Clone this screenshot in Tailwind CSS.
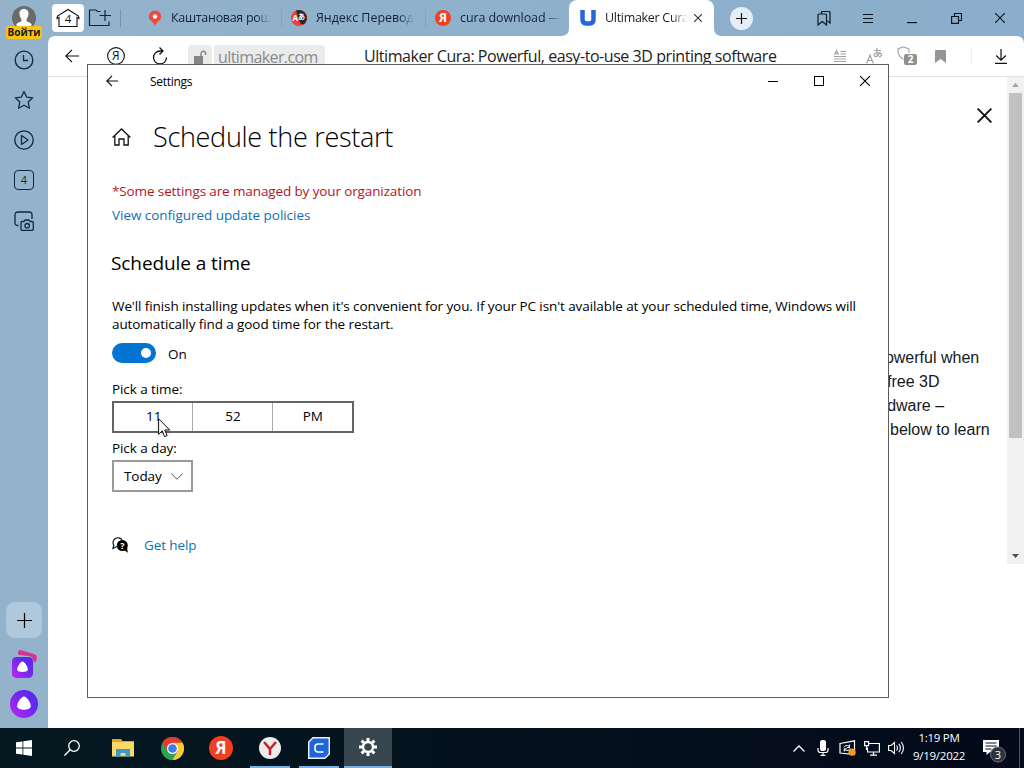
<!DOCTYPE html>
<html lang="en">
<head>
  <meta charset="UTF-8">
  <meta name="viewport" content="width=device-width, initial-scale=1.0">
  <title>Settings</title>
  <script src="https://cdn.jsdelivr.net/npm/@tailwindcss/browser@4"></script>
</head>
<body class="relative w-[1024px] h-[768px] overflow-hidden flex flex-col bg-white text-black font-['Open_Sans','Noto_Sans',sans-serif]">

  <!-- Browser -->
  <div class="h-[728px] flex bg-linear-to-r from-[#94b3cb] to-[#8aaecb]">
    <!-- Sidebar -->
    <aside class="w-12 shrink-0 flex flex-col items-center text-[#12283c]">
      <div class="relative h-10 w-full flex justify-center pt-1.5">
        <svg class="w-6 h-6" viewBox="0 0 24 24"><circle cx="12" cy="12" r="12" fill="#6b6b6b"/><path d="M12 3c3.2 0 4.800 2.200 4.500 5.300-.3 2.400-1.200 3.700-1.900 4.700v2.400c2.600.9 4.300 1.300 5.300 3.400A12 12 0 0 1 12 23a12 12 0 0 1-7.900-4.200c1-2.100 2.700-2.500 5.300-3.400V13c-.7-1-1.600-2.300-1.900-4.700C7.200 5.200 8.800 3 12 3z" fill="#fff"/></svg>
        <span class="absolute left-[6px] top-[26px] w-9 h-[13px] rounded-[3px] bg-[#f7c413] text-[#1a1a1a] text-[10px] leading-[12px] font-bold text-center">Войти</span>
      </div>
      <div class="h-10 flex items-center"><svg class="w-5 h-5" viewBox="0 0 20 20" fill="none" stroke="currentColor" stroke-width="1.300"><circle cx="10" cy="10" r="8.800"/><path d="M9.500 5v5.500h4.500"/></svg></div>
      <div class="h-10 flex items-center"><svg class="w-5 h-5" viewBox="0 0 20 20" fill="none" stroke="currentColor" stroke-width="1.300" stroke-linejoin="round"><path d="M10 1.500l2.600 5.600 6.100.7-4.500 4.200 1.200 6.200L10 15.200l-5.400 3 1.200-6.200L1.300 7.800l6.100-.7z"/></svg></div>
      <div class="h-10 flex items-center"><svg class="w-5 h-5" viewBox="0 0 20 20" fill="none" stroke="currentColor" stroke-width="1.300" stroke-linejoin="round"><circle cx="10" cy="10" r="9.200"/><path d="M7.500 5.500v9l6.500-4.500z"/></svg></div>
      <div class="h-10 flex items-center"><div class="w-5 h-5 border border-[#12283c] rounded-[4px] text-[11px] leading-[18px] text-center">4</div></div>
      <div class="h-10 flex items-center pt-px"><svg class="w-5 h-5" viewBox="0 0 20 20" fill="none" stroke="currentColor" stroke-width="1.300" stroke-linejoin="round"><path d="M4.500 14.500Q1 14.500 1 12V3.500a2.500 2.500 0 0 1 2.500-2.500h12a2.500 2.500 0 0 1 2.500 2.500V8"/><path d="M7 11.500a1 1 0 0 1 1-1h2l1.200-1.500h3.600L16 10.500h2.300a1 1 0 0 1 1 1v6.800a1 1 0 0 1-1 1H8a1 1 0 0 1-1-1z"/><circle cx="13.200" cy="14.700" r="2.200"/></svg></div>

      <div class="mt-auto w-9 h-9 mb-1.5 rounded-[9px] bg-[#afc8dc] flex items-center justify-center text-black"><svg class="w-[15px] h-[15px]" viewBox="0 0 15 15" stroke="currentColor" stroke-width="1.200"><path d="M7.500 0v15M0 7.500h15"/></svg></div>
      <div class="h-10 flex items-center"><svg class="w-7 h-7" viewBox="0 0 28 28">
        <defs><linearGradient id="alice" x1="0" y1="1" x2="1" y2="0"><stop offset="0" stop-color="#c324f5"/><stop offset=".6" stop-color="#6a28ee"/><stop offset="1" stop-color="#5128ea"/></linearGradient></defs>
        <path d="M8.500 1Q9-.5 11 .3C16 2 20 2.500 25 4.500c2.200 1 2.600 3 .5 8l-2-1Q23 7 19 6L9 5Q7.500 4 8.500 1z" fill="#d9309a"/><rect x="2" y="7" width="21" height="21" rx="4.500" fill="url(#alice)"/><path d="M12.500 11.500c2.200 0 6 6.200 5.200 8.800-.6 2.300-9.800 2.300-10.400 0-.8-2.600 3-8.800 5.200-8.800z" fill="#fff"/></svg></div>
      <div class="h-10 mb-1 flex items-center"><svg class="w-7 h-7" viewBox="0 0 28 28"><circle cx="14" cy="14" r="14" fill="url(#alice)"/><path d="M14 6.500c3 0 7.500 7 6.700 10.300-.9 3.900-12.500 3.900-13.400 0C6.500 13.500 11 6.500 14 6.500z" fill="#fff"/></svg></div>
    </aside>

    <div class="flex-1 min-w-0 flex flex-col">
      <!-- Tabs -->
      <div class="h-9 flex items-center pl-1 text-[13px] text-[#10233a] whitespace-nowrap">
        <div class="w-8 h-7 rounded-[4px] bg-white flex items-center justify-center">
          <svg class="w-6 h-5" viewBox="0 0 24 20" fill="none" stroke="#111" stroke-width="1.100"><path d="M3 18.500V9.500L1 10.500 1.500 8 12 1.500 22.500 8l.5 2.500-2-1v9z"/><text x="12" y="14.800" text-anchor="middle" font-size="11.500" fill="#111" stroke="none">4</text></svg>
        </div>
        <svg class="ml-1 w-6 h-5 shrink-0" viewBox="0 0 24 20" fill="none" stroke="currentColor" stroke-width="1.200"><path d="M12.500 3.500H9.500L8 2H1.500v15.500h19.500v-4"/><path d="M17 2v11M11.500 7.500H23"/></svg>
        <div class="ml-2 w-px h-[18px] bg-[#7593ab]"></div>
        <div class="w-[160px] flex items-center pl-[26px]">
          <svg class="w-4 h-4 shrink-0" viewBox="0 0 16 16"><path d="M8 .5a6.200 6.200 0 0 1 6.200 6.200C14.200 10.500 9.500 11 8 16 6.500 11 1.800 10.500 1.800 6.700A6.200 6.200 0 0 1 8 .5z" fill="#f4453a"/><circle cx="8" cy="6.500" r="2.300" fill="#fff"/></svg>
          <span class="ml-2 text-[12.500px] tracking-[-0.3px] mask-r-from-85%">Каштановая рощ</span>
        </div>
        <div class="w-px h-[18px] bg-[#84a3bc]"></div>
        <div class="w-[143px] flex items-center pl-[9px]">
          <svg class="w-4 h-4 shrink-0" viewBox="0 0 16 16"><circle cx="8" cy="8" r="8" fill="#ee4035"/><path d="M5 .6A8 8 0 0 1 12.500 14.600l-3-1.200L7.500 9z" fill="#252a32"/><text x="1.500" y="11" font-size="8" font-weight="bold" fill="#fff">A</text><text x="7" y="9" font-size="7" font-weight="bold" fill="#fff" font-family="Noto Sans CJK JP">あ</text></svg>
          <span class="ml-[9px] text-[12.500px] tracking-[-0.05px] mask-r-from-85%">Яндекс Перевод</span>
        </div>
        <div class="w-px h-[18px] bg-[#84a3bc]"></div>
        <div class="w-[143px] flex items-center pl-[9px]">
          <svg class="w-4 h-4 shrink-0" viewBox="0 0 16 16"><circle cx="8" cy="8" r="8" fill="#f33f23"/><text x="8" y="12.300" text-anchor="middle" font-size="12" font-weight="bold" fill="#fff">Я</text></svg>
          <span class="ml-[9px] text-[12.500px] tracking-[-0.1px] mask-r-from-85%">cura download —</span>
        </div>
        <div class="relative w-[145px] h-9 bg-white rounded-t-[8px] flex items-center pl-[11px] text-[#222]">
          <svg class="absolute -left-2 bottom-0 w-2 h-2" viewBox="0 0 8 8"><path d="M8 0v8H0q8 0 8-8z" fill="#fff"/></svg>
          <svg class="absolute -right-2 bottom-0 w-2 h-2" viewBox="0 0 8 8"><path d="M0 0v8h8Q0 8 0 0z" fill="#fff"/></svg>
          <svg class="w-4 h-4 shrink-0" viewBox="0 0 16 16" fill="none"><path d="M2.500 0v9.500q0 4 4 4h3q4 0 4-4V0" stroke="#2566d8" stroke-width="4.500"/></svg>
          <span class="ml-[9px] w-[83px] text-[12.500px] tracking-[-0.3px] mask-r-from-80%">Ultimaker Cura</span>
          <svg class="ml-[6px] w-2 h-2 shrink-0" viewBox="0 0 8 8" stroke="#333" stroke-width="1.100"><path d="M0 0l8 8M8 0L0 8"/></svg>
        </div>
        <div class="ml-[16px] w-[23px] h-[23px] rounded-full bg-[#e3eef8] flex items-center justify-center"><svg class="w-[11px] h-[11px]" viewBox="0 0 11 11" stroke="#111" stroke-width="1.200"><path d="M5.500 0v11M0 5.500h11"/></svg></div>
        <div class="ml-auto pr-[2px] flex text-[#0c1826]">
          <div class="w-11 flex justify-center"><svg class="w-[14px] h-[15px]" viewBox="0 0 14 15" fill="none" stroke="currentColor" stroke-width="1.200"><path d="M4.500 3V1.500q0-1 1-1h6.500q1 0 1 1V12l-2.500-2"/><path d="M1 14V4q0-1 1-1h6.500q1 0 1 1v10L5.200 10.500z"/></svg></div>
          <div class="w-11 flex justify-center items-center"><svg class="w-[10px] h-[11px]" viewBox="0 0 10 11" stroke="currentColor" stroke-width="1.100"><path d="M0 1.500h10M0 5.500h10M0 9.500h10"/></svg></div>
          <div class="w-11 flex justify-center items-end"><svg class="w-[10px] h-[2px] mb-[2px]" viewBox="0 0 10 2"><path d="M0 0h10v1.200H0z" fill="currentColor"/></svg></div>
          <div class="w-11 flex justify-center items-center"><svg class="w-[11px] h-[11px]" viewBox="0 0 11 11" fill="none" stroke="currentColor" stroke-width="1.200"><path d="M3.500 3.500v-3h7v7h-3M.6 3.500h6.900v6.900H.6z"/></svg></div>
          <div class="w-11 flex justify-center items-center"><svg class="w-[10px] h-[10px]" viewBox="0 0 10 10" stroke="currentColor" stroke-width="1.200"><path d="M0 0l10 10M10 0L0 10"/></svg></div>
        </div>
      </div>

      <!-- Address bar -->
      <div class="h-[41px] shrink-0 bg-white rounded-t-[7px] border-b border-[#e4e4e4] flex items-center text-[#111] whitespace-nowrap">
        <svg class="ml-[17px] w-[14px] h-[14px] shrink-0" viewBox="0 0 14 14" fill="none" stroke="currentColor" stroke-width="1.200"><path d="M14 7H.8M7 .8L.8 7 7 13.200"/></svg>
        <svg class="ml-[28px] w-[18px] h-[18px] shrink-0" viewBox="0 0 18 18" fill="none" stroke="currentColor" stroke-width="1.100"><circle cx="9" cy="9" r="8.400"/><text x="8.800" y="13.200" text-anchor="middle" font-size="12" fill="currentColor" stroke="none">Я</text></svg>
        <svg class="ml-[27px] w-[16px] h-[18px] shrink-0" viewBox="0 0 16 18" fill="none" stroke="currentColor" stroke-width="1.300"><path d="M10.500 4H8a6.500 6.500 0 1 0 6.500 6.500M7.500 .5L11 4 7.500 7.500"/></svg>
        <div class="ml-[20px] mt-[1px] w-6 h-[24px] rounded-[4px] bg-[#ebebeb] flex items-center justify-center"><svg class="w-[14px] h-[14px]" viewBox="0 0 14 14"><path d="M1 6h9v8H1z" fill="#858585"/><path d="M8 6V3.500a2.300 2.300 0 0 1 4.600 0V5" fill="none" stroke="#858585" stroke-width="1.400"/></svg></div>
        <div class="ml-[2px] mt-[1px] w-[111px] h-[24px] rounded-[4px] bg-[#ebebeb] pl-1 text-[16px] leading-[24px] tracking-[-0.6px] text-[#8a8a8a]">ultimaker.com</div>
        <div class="ml-[39px] text-[16px] tracking-[-0.440px] text-[#222]">Ultimaker Cura: Powerful, easy-to-use 3D printing software</div>
        <div class="ml-auto flex items-center pr-[17px]">
          <svg class="w-3 h-3" viewBox="0 0 12 12" stroke="#a0a0a0" fill="none"><path d="M6.500 1.500H12M6.500 4H12M0 6.500h12M0 9h12M0 11.500h12"/><path d="M.5 5L2.500.5 4.500 5M1.200 3.500h2.600" stroke-width="1.200"/></svg>
          <svg class="ml-[20px] w-4 h-4" viewBox="0 0 16 16" stroke="#a0a0a0" fill="none" stroke-width="1.100"><path d="M.6 15.500L4 7l3.400 8.500M1.800 12.500h4.400"/><path d="M8 2.500h7M11 0v5.500q0 2 1 3M14 4q-2 5-5 4.500-1.500-.5-.5-2.500 2-2 6-.8 2.500 2-1.500 4"/></svg>
          <svg class="ml-[15px] w-5 h-5" viewBox="0 0 20 20" fill="none"><path d="M6.500.8L12 3v4M6.500.8L1 3q-.5 7 5.500 10.500" stroke="#a0a0a0" stroke-width="1.100"/><rect x="7" y="8" width="13" height="11" rx="2" fill="#8f8f8f"/><text x="13.500" y="17" text-anchor="middle" font-size="10" font-weight="bold" fill="#fff">2</text></svg>
          <svg class="ml-[18px] w-[11px] h-[13px]" viewBox="0 0 11 13"><path d="M0 1q0-1 1-1h9q1 0 1 1v12L5.500 9 0 13z" fill="#959595"/></svg>
          <div class="ml-[25px] w-px h-4 bg-[#eeeeee]"></div>
          <svg class="ml-[23px] w-[12px] h-[15px]" viewBox="0 0 12 15" fill="none" stroke="currentColor" stroke-width="1.200"><path d="M6 0v11M1.200 6.500L6 11.200l4.800-4.700M0 14.300h12"/></svg>
        </div>
      </div>

      <!-- Page -->
      <div class="flex-1 bg-white flex justify-end">
        <div class="w-[131px] flex flex-col">
          <svg class="mt-[31px] ml-[101px] w-[15px] h-[15px] shrink-0" viewBox="0 0 15 15" stroke="#111" stroke-width="1.900"><path d="M.6.600l13.800 13.800M14.400.6L.6 14.400"/></svg>
          <div class="mt-[223px] text-[16px] leading-6 text-[#15191d] whitespace-nowrap font-['Liberation_Sans',Arial,sans-serif]">
            <p>powerful when</p>
            <p class="pl-[11px]">free 3D</p>
            <p class="-ml-[12px]">hardware –</p>
            <p class="pl-[14px]">below to learn</p>
          </div>
        </div>
        <div class="w-[17px] h-[487px] bg-[#f1f1f1] flex flex-col items-center">
          <svg class="w-[17px] h-4 shrink-0" viewBox="0 0 17 16"><path d="M5 10h7L8.500 6z" fill="#a3a3a3"/></svg>
          <div class="w-[13px] h-[345px] bg-[#c1c1c1]"></div>
          <svg class="mt-auto w-[17px] h-4 shrink-0" viewBox="0 0 17 16"><path d="M5 6h7l-3.500 4z" fill="#505050"/></svg>
        </div>
      </div>
    </div>
  </div>

  <!-- Taskbar -->
  <div class="h-10 flex items-center bg-linear-to-r from-[#051820] to-[#030a1a] text-white">
    <div class="w-12 flex justify-center"><svg class="w-4 h-4" viewBox="0 0 16 16" fill="#fff"><path d="M0 2.300L6.500 1.400v6.200H0zM7.300 1.300L16 0v7.600H7.300zM0 8.400h6.500v6.200L0 13.700zM7.300 8.400H16V16l-8.700-1.300z"/></svg></div>
    <div class="w-12 flex justify-center"><svg class="w-4 h-4" viewBox="0 0 16 16" fill="none" stroke="#fff" stroke-width="1.300"><circle cx="10" cy="6" r="5.300"/><path d="M6.200 9.800L.4 15.600"/></svg></div>
    <div class="w-[53px] flex justify-center"><svg class="w-[22px] h-[18px]" viewBox="0 0 22 18"><path d="M0 0h9l1.500 2H22v15H0z" fill="#e3a22c"/><path d="M0 3h22v14.500H0z" fill="#fbd968"/><path d="M4 10h14v8h-4.500v-4h-5v4H4z" fill="#3f96c8"/></svg></div>
    <div class="w-[46px] flex justify-center"><svg class="w-[23px] h-[23px]" viewBox="0 0 24 24"><circle cx="12" cy="12" r="12" fill="#2ba24c"/><path d="M1.600 6A12 12 0 0 1 22.400 6L12 6.500 6.800 15z" fill="#e33b2e"/><path d="M22.400 6A12 12 0 0 1 12 24l5.200-9L12 6.500 12 6z" fill="#fcc934"/><circle cx="12" cy="12" r="5.800" fill="#fff"/><circle cx="12" cy="12" r="4.500" fill="#3b7ded"/></svg></div>
    <div class="w-[52px] flex justify-center"><svg class="w-6 h-6" viewBox="0 0 24 24"><circle cx="12" cy="12" r="12" fill="#f43e20"/><text x="12" y="18" text-anchor="middle" font-size="17" font-weight="bold" fill="#fff">Я</text></svg></div>
    <div class="w-[46px] flex justify-center"><svg class="w-[22px] h-[22px]" viewBox="0 0 22 22"><circle cx="11" cy="11" r="11" fill="#ececec"/><path d="M5 5l6 7 6-7M11 11.500V18" fill="none" stroke="#c9202a" stroke-width="2.500"/></svg></div>
    <div class="w-[51px] flex justify-center"><svg class="w-[22px] h-[22px]" viewBox="0 0 22 22"><path d="M5 .7h16.300V17l-4.500 4.300H.7V5z" fill="#1f63dd" stroke="#e6f3fc" stroke-width="1.500"/><path d="M15.500 7H10Q7 7 7 10v2q0 3 3 3h5.500" fill="none" stroke="#fff" stroke-width="1.600"/></svg></div>
    <div class="w-12 h-10 bg-[#38474f] border-b-2 border-[#76b1e2] flex items-center justify-center"><svg class="w-[18px] h-[18px]" viewBox="0 0 18 18" fill="none" stroke="#fff"><circle cx="9" cy="9" r="5" stroke-width="2.400"/><g stroke-width="3"><path d="M9 0v3M9 15v3M0 9h3M15 9h3M2.600 2.600l2.200 2.200M13.200 13.200l2.200 2.200M2.600 15.400l2.200-2.200M13.200 4.800l2.200-2.200"/></g></svg></div>
    <div class="ml-auto flex items-center">
      <svg class="w-3 h-[7px]" viewBox="0 0 12 7" fill="none" stroke="#fff" stroke-width="1.300"><path d="M.5 6.500L6 1l5.500 5.500"/></svg>
      <svg class="ml-[12px] w-3 h-4" viewBox="0 0 12 16" fill="none" stroke="#fff"><rect x="3.500" y=".5" width="5" height="10" rx="1.500" fill="#fff"/><path d="M1 8v2q0 2.500 2.500 2.500h5Q11 12.500 11 10V8M6 12.500V15M3.500 15.300h5" stroke-width="1.200"/></svg>
      <svg class="ml-[10px] w-[17px] h-4" viewBox="0 0 17 16" fill="none" stroke="#fff" stroke-width="1.200"><path d="M1 3.500L15.500.8V14.500L1 13z"/><path d="M5 7.500q1-2.500 3.500-2t2 2M10.500 4.500v3H8M11 8.500q-1 2.500-3.500 2t-2-1.500M5.200 11.500V8.800H8" stroke-width="1"/><circle cx="13" cy="12.200" r="3.600" fill="#f2992c" stroke="none"/></svg>
      <svg class="ml-[8px] w-4 h-[15px]" viewBox="0 0 16 15" fill="none" stroke="#fff" stroke-width="1.200"><path d="M5 2.500h10.400V11H3.500V6.500M.6.600h4v4H.6zM2.500 4.500V9M9.500 11v3M6 14.200h7"/></svg>
      <svg class="ml-[8px] w-[17px] h-[14px]" viewBox="0 0 17 14" fill="none" stroke="#fff" stroke-width="1.100"><path d="M.6 4.500h2.500L6.500 1.500v11L3.100 9.500H.6z"/><path d="M8.500 4.500q2 2.500 0 5M10.800 2.800q3.200 4.200 0 8.400M13.200 1q4.500 6 0 12"/></svg>
      <div class="w-[70px] pr-[2px] text-center text-[11.500px] leading-[18px] tracking-[-0.25px] pb-[3px]"><p>1:19 PM</p><p>9/19/2022</p></div>
      <svg class="ml-[7px] w-[25px] h-[25px] mt-1" viewBox="0 0 25 25"><path d="M1 2h16v12H8l-3.500 3v-3H1z" fill="#fff"/><path d="M3.500 5h11M3.500 8h11M3.500 11h6" stroke="#06101c" stroke-width="1.200"/><circle cx="16" cy="16.500" r="7.500" fill="#2b333c" stroke="#69737c"/><text x="16" y="20.500" text-anchor="middle" font-size="11" fill="#fff">3</text></svg>
      <div class="ml-[12px] mr-1 w-px h-10 bg-[#4b5660]"></div>
    </div>
    <div class="absolute left-[250px] top-[766px] w-10 h-[2px] bg-[#76b1e2]"></div>
    <div class="absolute left-[299px] top-[766px] w-10 h-[2px] bg-[#76b1e2]"></div>
  </div>

  <!-- Settings window -->
  <div class="absolute left-[87px] top-[64px] w-[802px] h-[634px] bg-white border border-[#5c5c5c] text-[13.500px] tracking-[-0.090px]">
    <div class="h-8 flex items-center pl-[18px] pr-[18px]">
      <svg class="w-3 h-3" viewBox="0 0 12 12" fill="none" stroke="#111" stroke-width="1.200"><path d="M12 6H.8M6 .8L.8 6 6 11.200"/></svg>
      <span class="ml-8 pt-px text-[12px] tracking-[-0.3px]">Settings</span>
      <div class="ml-auto flex items-center gap-9 text-black">
        <svg class="w-[10px] h-[10px]" viewBox="0 0 10 10"><path d="M0 5h10v1H0z"/></svg>
        <div class="w-[10px] h-[10px] border border-black"></div>
        <svg class="w-[10px] h-[10px]" viewBox="0 0 10 10" stroke="currentColor" stroke-width="1.100"><path d="M0 0l10 10M10 0L0 10"/></svg>
      </div>
    </div>
    <div class="pl-6 pt-[20px]">
      <div class="flex items-center h-10">
        <svg class="w-[19px] h-[18px]" viewBox="0 0 19 18" fill="none" stroke="#111" stroke-width="1.300"><path d="M.6 9.500L9.500 1l8.900 8.500M2.800 7.800V17h4.200v-6h5v6h4.200V7.800"/></svg>
        <h1 class="ml-[22px] text-[27px] font-light tracking-[-0.3px] whitespace-nowrap">Schedule the restart</h1>
      </div>
      <p class="mt-[24px] leading-5 tracking-[-0.120px] text-[#b3141f]">*Some settings are managed by your organization</p>
      <a class="block mt-1 leading-5 tracking-[-0.040px] text-[#0f6fb4]">View configured update policies</a>
      <h2 class="mt-6 -ml-px text-[19px] leading-7">Schedule a time</h2>
      <p class="mt-[20px] leading-[18px] whitespace-nowrap">We'll finish installing updates when it's convenient for you. If your PC isn't available at your scheduled time, Windows will<br>automatically find a good time for the restart.</p>
      <div class="mt-[10px] h-5 flex items-center">
        <div class="w-11 h-5 rounded-full bg-[#0474d2] flex items-center justify-end pr-[5px]"><div class="w-[10px] h-[10px] rounded-full bg-white"></div></div>
        <span class="ml-3 pt-[2px]">On</span>
      </div>
      <p class="mt-[17px] leading-[18px]">Pick a time:</p>
      <div class="mt-[3px] w-[242px] h-8 border-2 border-[#646464] grid grid-cols-3 divide-x divide-[#aaaaaa] text-center leading-[27px]">
        <div class="pl-px">11</div><div class="pl-px">52</div><div class="pl-px">PM</div>
      </div>
      <p class="mt-[6px] leading-[18px]">Pick a day:</p>
      <div class="mt-[3px] w-[81px] h-8 border-2 border-[#999999] flex items-center justify-between pl-[10px] pr-2">
        <span>Today</span>
        <svg class="w-3 h-[7px]" viewBox="0 0 12 7" fill="none" stroke="#555"><path d="M.3.500L6 6.300 11.700.5"/></svg>
      </div>
      <div class="mt-[43px] h-5 flex items-center">
        <svg class="w-4 h-4" viewBox="0 0 16 16"><path d="M5 9.500L1 11.500l.8-3.300A4.600 4.600 0 1 1 10 3" fill="none" stroke="#111" stroke-width="1.200"/><circle cx="10.300" cy="8.500" r="5.500"/><path d="M12 13l3.800 2.800L15 10z"/><text x="10.300" y="11.800" text-anchor="middle" font-size="9" font-weight="bold" fill="#fff">?</text></svg>
        <a class="ml-4 text-[#0f6fb4]">Get help</a>
      </div>
    </div>
  </div>

  <!-- Pointer -->
  <svg class="absolute left-[158px] top-[418px] w-[13px] h-[20px] drop-shadow-sm" viewBox="0 0 13 20"><path d="M.6.800v15.500l3.600-3.500 2.400 5.800 2.500-1-2.400-5.600h5z" fill="#fff" stroke="#111"/></svg>
</body>
</html>
